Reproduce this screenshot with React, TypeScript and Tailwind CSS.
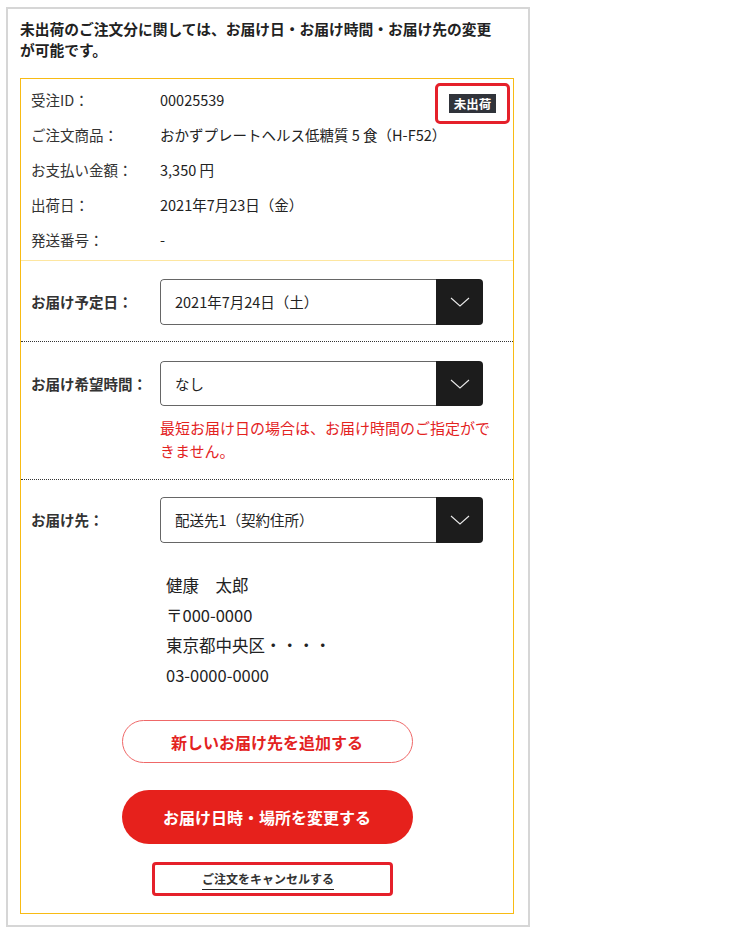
import React from "react";

const FONT = { fontFamily: '"Noto Sans CJK JP", "Noto Sans", sans-serif' };

const info = [
  { label: "受注ID：", value: "00025539" },
  { label: "ご注文商品：", value: "おかずプレートヘルス低糖質 5 食（H-F52）" },
  { label: "お支払い金額：", value: "3,350 円" },
  { label: "出荷日：", value: "2021年7月23日（金）" },
  { label: "発送番号：", value: "-" },
];

const Chevron = () => (
  <svg width="20" height="10" viewBox="0 0 20 10" fill="none">
    <polyline points="1,1 10,9 19,1" stroke="#e8e8e8" strokeWidth="1.1" />
  </svg>
);

const SelectBox = ({ value }: { value: string }) => (
  <div className="flex w-[323px] rounded-[4px] overflow-hidden">
    <div className="flex-1 flex items-center pl-[14px] border border-r-0 border-[#666] rounded-l-[4px] text-[14.5px] text-[#222]">
      {value}
    </div>
    <div className="w-[47px] bg-[#1c1c1c] flex items-center justify-center">
      <Chevron />
    </div>
  </div>
);

const App = () => {
  return (
    <div className="pl-[6px] pt-[7px] bg-white" style={FONT}>
      <div className="w-[524px] border-2 border-[#d6d6d6] pl-[12px] pr-[14px] pt-[9px] pb-[11px]">
        <p className="text-[14.75px] font-bold leading-[21px] text-[#222]">
          未出荷のご注文分に関しては、お届け日・お届け時間・お届け先の変更
          <br />
          が可能です。
        </p>

        <div className="relative mt-[18px] border-[1.5px] border-[#f8bb14]">
          {/* order info */}
          <div className="px-[10px] pt-[3px] pb-[3px] border-b border-[#fde6a0]">
            {info.map((row) => (
              <div key={row.label} className="flex items-center h-[35px] text-[14.5px] text-[#333]">
                <span className="w-[129px] shrink-0">{row.label}</span>
                <span className="text-[#222]">{row.value}</span>
              </div>
            ))}
          </div>

          <div className="absolute right-[3px] top-[4px] w-[75px] h-[41px] border-[3px] border-[#e5202a] rounded-[5px] flex items-center justify-center">
            <span className="bg-[#30333a] text-white text-[12.5px] font-bold leading-[19px] px-[5px]">
              未出荷
            </span>
          </div>

          {/* delivery date */}
          <div className="px-[10px] pt-[18px] pb-[16px] border-b border-dotted border-[#333]">
            <div className="flex items-center h-[46px]">
              <span className="w-[129px] shrink-0 text-[14.5px] font-bold text-[#333]">お届け予定日：</span>
              <div className="h-[46px] flex">
                <SelectBox value="2021年7月24日（土）" />
              </div>
            </div>
          </div>

          {/* delivery time */}
          <div className="px-[10px] pt-[19px] pb-[17px] border-b border-dotted border-[#333]">
            <div className="flex items-center h-[45px]">
              <span className="w-[129px] shrink-0 text-[14.5px] font-bold text-[#333]">お届け希望時間：</span>
              <div className="h-[45px] flex">
                <SelectBox value="なし" />
              </div>
            </div>
            <p className="mt-[10px] pl-[129px] text-[15px] leading-[23px] text-[#e3231f]">
              最短お届け日の場合は、お届け時間のご指定ができません。
            </p>
          </div>

          {/* delivery address */}
          <div className="px-[10px] pt-[17px] pb-[17px]">
            <div className="flex items-center h-[46px]">
              <span className="w-[129px] shrink-0 text-[14.5px] font-bold text-[#333]">お届け先：</span>
              <div className="h-[46px] flex">
                <SelectBox value="配送先1（契約住所）" />
              </div>
            </div>

            <div className="mt-[27px] pl-[135px] text-[16.5px] leading-[30px] text-[#222]">
              <p>健康　太郎</p>
              <p>〒000-0000</p>
              <p>東京都中央区・・・・</p>
              <p>03-0000-0000</p>
            </div>

            <div className="mt-[30px] mx-auto w-[291px] h-[43px] rounded-full border-[1.5px] border-[#ef6868] flex items-center justify-center text-[16px] font-bold text-[#e3231f]">
              新しいお届け先を追加する
            </div>

            <div className="mt-[27px] mx-auto w-[291px] h-[54px] rounded-full bg-[#e6211c] flex items-center justify-center text-[16px] font-bold text-white">
              お届け日時・場所を変更する
            </div>

            <div className="mt-[18px] ml-[121px] w-[241px] h-[34px] border-[3px] border-[#e5202a] rounded-[4px] pl-[47px]">
              <span className="inline-block text-[12px] font-bold leading-[16px] text-[#333] border-b border-[#222] pb-[2px]">
                ご注文をキャンセルする
              </span>
            </div>
          </div>
        </div>
      </div>
    </div>
  );
};

export default App;
